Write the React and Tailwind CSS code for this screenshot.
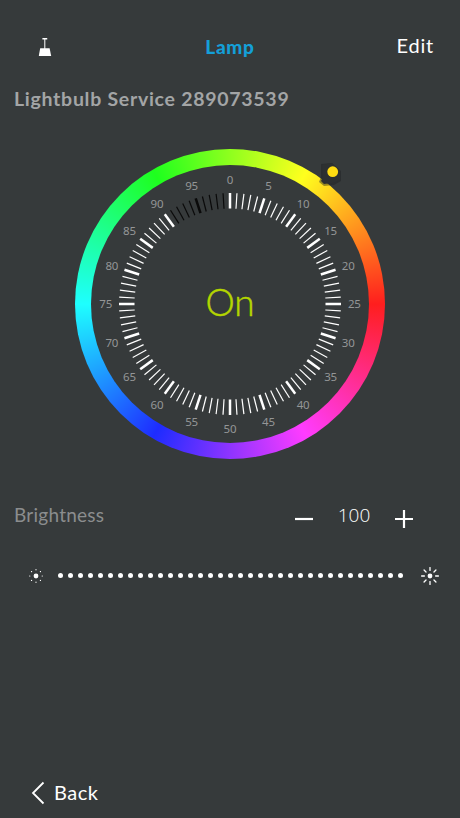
import React, { useState } from "react";

const CENTER = 139;
const TICKS = Array.from({ length: 100 }, (_, i) => i);
const LABELS = Array.from({ length: 20 }, (_, i) => i * 5);
const DOTS = Array.from({ length: 35 }, (_, i) => i);
const RAYS = [0, 45, 90, 135, 180, 225, 270, 315];

const LampIcon = () => (
    <svg width="14" height="20" viewBox="0 0 14 20" fill="#fff">
        <rect x="4.3" y="1" width="5" height="1.6" rx="0.5" />
        <rect x="6.3" y="2" width="1" height="10" />
        <path d="M2.2 11.2h9.4l1.6 7.8H0.8z" />
    </svg>
);

const Dial = ({ value, state }) => (
    <svg width="278" height="278" viewBox="0 0 278 278" className="rounded-full bg-[#363a3b]">
        {TICKS.map((i) => {
            const major = i % 5 === 0;
            const on = i <= value;
            return (
                <line
                    key={i}
                    x1={CENTER}
                    x2={CENTER}
                    y1={CENTER - 111}
                    y2={CENTER - 95.5}
                    stroke={on ? "#fff" : "#0a0a0a"}
                    strokeWidth={major ? 2.5 : 1.2}
                    transform={`rotate(${i * 3.6} ${CENTER} ${CENTER})`}
                />
            );
        })}
        {LABELS.map((n) => {
            const a = (n * 3.6 * Math.PI) / 180;
            return (
                <text
                    key={n}
                    x={CENTER + 124.3 * Math.sin(a)}
                    y={CENTER - 124.3 * Math.cos(a) + 4.2}
                    textAnchor="middle"
                    className="fill-[#949697] font-['Noto_Sans',sans-serif] text-[11.5px] tracking-[-0.2px]"
                >
                    {n}
                </text>
            );
        })}
        <text
            x={CENTER}
            y={CENTER + 12}
            textAnchor="middle"
            className="fill-[#b4d600] stroke-[#b4d600] stroke-[0.5px] font-['Lato',sans-serif] text-[37px] font-light"
        >
            {state}
        </text>
    </svg>
);

const Sun = ({ core, from, to, stroke }) => (
    <svg width="20" height="20" viewBox="-10 -10 20 20">
        <circle r={core} fill="#fff" />
        {RAYS.map((r) => (
            <line
                key={r}
                y1={-from}
                y2={-to}
                stroke="#fff"
                strokeWidth={stroke}
                strokeLinecap="round"
                transform={`rotate(${r})`}
            />
        ))}
    </svg>
);

export default function App() {
    const [brightness, setBrightness] = useState(100);

    return (
        <div className="flex h-[818px] w-[460px] flex-col overflow-hidden bg-[#363a3b] font-['Lato',sans-serif] text-white">
            <header className="mt-[23px] grid h-[48px] grid-cols-3 items-center pr-[26px] pl-[38px]">
                <LampIcon />
                <h1 className="pr-3 text-center text-[19px] leading-6 font-black tracking-[0.7px] text-[#149fd8]">Lamp</h1>
                <button className="justify-self-end pb-[4px] text-[20px] leading-6 tracking-[0.8px]">Edit</button>
            </header>

            <h2 className="mt-[16px] pl-[14px] text-[19.5px] leading-6 font-bold tracking-[0.72px] text-[#a3a5a6]">
                Lightbulb Service 289073539
            </h2>

            {/* Color ring */}
            <div className="relative mt-[38px] ml-[75px] size-[310px] rounded-full bg-[conic-gradient(from_30deg,#ffff1e,#ff1e1e_60deg,#ff3cff_120deg,#1e2cff_180deg,#1effff_240deg,#1eff1e_300deg,#ffff1e)] p-[16px]">
                <Dial value={90} state="On" />
                <svg width="32" height="32" viewBox="0 0 32 32" className="absolute top-[8px] left-[239px]">
                    <path d="M7 7l11-1 9 8v10l-7 4-10 1-5-4 2-5z" fill="#202223" opacity="0.45" />
                    <path d="M8 8l10-2 8 8v9l-8 3-8 1-3-3 2-4z" fill="#2d3031" />
                    <circle cx="18.7" cy="14.7" r="5.4" fill="#ffdc12" />
                </svg>
            </div>

            <div className="mt-[44px] flex h-[24px] items-center pr-[46px] pl-[14px]">
                <span className="flex-1 text-[19px] leading-6 tracking-[0.25px] text-[#8b8d8e]">Brightness</span>
                <button onClick={() => setBrightness(brightness - 1)} className="pt-[7px]">
                    <svg width="20" height="20" viewBox="0 0 20 20" stroke="#fff" strokeWidth="2.2">
                        <path d="M1 10h18" />
                    </svg>
                </button>
                <span className="w-[80px] text-center font-['Open_Sans',sans-serif] text-[19px] leading-6 font-light">
                    {brightness}
                </span>
                <button onClick={() => setBrightness(brightness + 1)} className="pt-[7px]">
                    <svg width="20" height="20" viewBox="0 0 20 20" stroke="#fff" strokeWidth="2.2">
                        <path d="M1 10h18M10 1v18" />
                    </svg>
                </button>
            </div>

            <div className="mt-[38.5px] flex h-[20px] items-center pr-[20px] pl-[26px]">
                <Sun core={2.4} from={6.2} to={6.3} stroke={1.2} />
                <div className="ml-[11.5px] flex w-[345px] justify-between">
                    {DOTS.map((i) => (
                        <span key={i} className="size-[5px] rounded-full bg-white" />
                    ))}
                </div>
                <div className="ml-auto">
                    <Sun core={2.4} from={5.6} to={8.4} stroke={1.3} />
                </div>
            </div>

            <footer className="mt-auto flex items-center gap-[9px] pb-[13px] pl-[31px]">
                <svg width="14" height="24" viewBox="0 0 14 24" fill="none" stroke="#fff" strokeWidth="1.8">
                    <path d="M12.5 1.5L2 12l10.5 10.5" />
                </svg>
                <button className="pb-[1px] text-[20px] leading-6 tracking-[0.5px]">Back</button>
            </footer>
        </div>
    );
}
